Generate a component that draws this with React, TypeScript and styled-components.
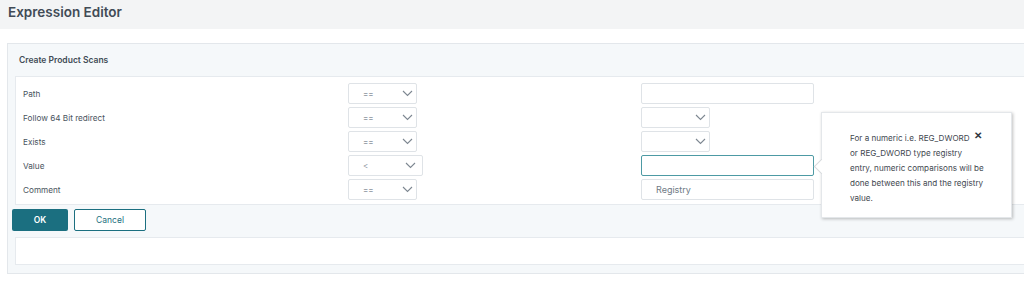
import React from 'react';
import styled, {createGlobalStyle} from 'styled-components';

const GlobalStyle = createGlobalStyle`
  html, body {
    margin: 0;
    padding: 0;
    background: #ffffff;
    font-family: Inter, "Noto Sans", sans-serif;
    color: #3f4a55;
    overflow: hidden;
  }
`

type Row = {
    label: string
    op: string
    wideOp?: boolean
    value: 'text' | 'select' | 'focused' | 'placeholder'
}

const rows: Row[] = [
    {label: 'Path', op: '==', value: 'text'},
    {label: 'Follow 64 Bit redirect', op: '==', value: 'select'},
    {label: 'Exists', op: '==', value: 'select'},
    {label: 'Value', op: '<', wideOp: true, value: 'focused'},
    {label: 'Comment', op: '==', value: 'placeholder'},
]

const tipLines = [
    'For a numeric i.e. REG_DWORD',
    'or REG_DWORD type registry',
    'entry, numeric comparisons will be',
    'done between this and the registry',
    'value.',
]

const Chevron = () => (
    <svg width="11" height="7" viewBox="0 0 11 7">
        <path d="M1 1l4.5 4.5L10 1" fill="none" stroke="#7d8791" strokeWidth="1.1"/>
    </svg>
)

export default function App() {
    return (
        <Page>
            <GlobalStyle/>
            <Header>Expression Editor</Header>
            <Panel>
                <PanelTitle>Create Product Scans</PanelTitle>
                <FormBox>
                    {rows.map(row => (
                        <FormRow key={row.label}>
                            <Label>{row.label}</Label>
                            <OpCell>
                                <Select $wide={row.wideOp}>
                                    <span>{row.op}</span>
                                    <Chevron/>
                                </Select>
                            </OpCell>
                            <ValueCell>
                                {row.value === 'select' && (
                                    <Select $wide={false}>
                                        <span/>
                                        <Chevron/>
                                    </Select>
                                )}
                                {row.value === 'text' && <TextInput/>}
                                {row.value === 'focused' && (
                                    <>
                                        <TextInput $focused/>
                                        <Tooltip>
                                            <TipText>
                                                {tipLines.map(line => <TipLine key={line}>{line}</TipLine>)}
                                            </TipText>
                                            <Close>✕</Close>
                                        </Tooltip>
                                    </>
                                )}
                                {row.value === 'placeholder' && <TextInput>Registry</TextInput>}
                            </ValueCell>
                        </FormRow>
                    ))}
                </FormBox>
                <Actions>
                    <PrimaryButton>OK</PrimaryButton>
                    <SecondaryButton>Cancel</SecondaryButton>
                </Actions>
                <Results/>
            </Panel>
        </Page>
    )
}

const Page = styled.div`
  width: 1024px;
  height: 283px;
  display: flex;
  flex-direction: column;
`

const Header = styled.div`
  height: 29px;
  background: #f3f4f5;
  padding: 0 8px;
  display: flex;
  align-items: center;
  font-size: 13.5px;
  font-weight: 600;
  color: #414b56;
  padding-bottom: 5px;
  box-sizing: border-box;
`

const Panel = styled.div`
  margin: 14px 0 0 7px;
  background: #f5f8fa;
  border: 1px solid #e3e7eb;
  border-right: none;
  height: 231px;
  box-sizing: border-box;
  display: flex;
  flex-direction: column;
`

const PanelTitle = styled.div`
  height: 32px;
  padding-left: 11px;
  display: flex;
  align-items: center;
  font-size: 8.5px;
  font-weight: 600;
  color: #414b56;
`

const FormBox = styled.div`
  margin-left: 7px;
  background: #ffffff;
  border: 1px solid #e6eaee;
  border-right: none;
  padding: 6px 0 4px 7px;
  display: flex;
  flex-direction: column;
  gap: 3px;
`

const FormRow = styled.div`
  display: flex;
  align-items: center;
  height: 21px;
`

const Label = styled.div`
  width: 325px;
  font-size: 8.2px;
  color: #4a545e;
`

const OpCell = styled.div`
  width: 293px;
`

const ValueCell = styled.div`
  position: relative;
  flex: 1;
`

const Select = styled.div<{ $wide?: boolean }>`
  width: ${p => (p.$wide ? 75 : 69)}px;
  height: 21px;
  box-sizing: border-box;
  border: 1px solid #dfe3e7;
  border-radius: 2px;
  display: flex;
  align-items: center;
  justify-content: space-between;
  padding: 0 ${p => (p.$wide ? 6 : 3)}px 0 14px;
  font-size: 8px;
  color: #8a939c;
`

const TextInput = styled.div<{ $focused?: boolean }>`
  width: 173px;
  height: 21px;
  box-sizing: border-box;
  border: 1px solid ${p => (p.$focused ? '#4d9aa4' : '#dfe3e7')};
  border-radius: 2px;
  padding-left: 14px;
  display: flex;
  align-items: center;
  font-size: 9px;
  color: #707b86;
`

const Tooltip = styled.div`
  position: absolute;
  left: 180px;
  top: -43px;
  width: 191px;
  height: 106px;
  box-sizing: border-box;
  background: #ffffff;
  border: 1px solid #e4e7ea;
  box-shadow: 1px 1px 3px rgba(0, 0, 0, 0.25);
  padding: 18px 0 0 28px;

  &::before {
    content: '';
    position: absolute;
    left: -6px;
    top: 48px;
    width: 10px;
    height: 10px;
    background: #ffffff;
    border-left: 1px solid #d6dadd;
    border-bottom: 1px solid #d6dadd;
    transform: rotate(45deg);
  }
`

const TipText = styled.div`
  font-size: 8.1px;
  line-height: 15px;
  color: #3f4850;
`

const TipLine = styled.div`
  white-space: nowrap;
`

const Close = styled.div`
  position: absolute;
  left: 152px;
  top: 16px;
  font-size: 10px;
  font-weight: 700;
  color: #2f3740;
`

const Actions = styled.div`
  display: flex;
  gap: 6px;
  padding: 4px 0 0 4px;
  height: 32px;
  box-sizing: border-box;
`

const PrimaryButton = styled.div`
  width: 56px;
  height: 22px;
  background: #1b6f80;
  border-radius: 2px;
  color: #ffffff;
  font-size: 8.5px;
  font-weight: 600;
  display: flex;
  align-items: center;
  justify-content: center;
`

const SecondaryButton = styled.div`
  width: 72px;
  height: 22px;
  box-sizing: border-box;
  border: 1px solid #1b6f80;
  border-radius: 2px;
  background: #ffffff;
  color: #1b6f80;
  font-size: 8.5px;
  display: flex;
  align-items: center;
  justify-content: center;
`

const Results = styled.div`
  margin-left: 7px;
  height: 26px;
  background: #ffffff;
  border: 1px solid #e6eaee;
  border-right: none;
`
